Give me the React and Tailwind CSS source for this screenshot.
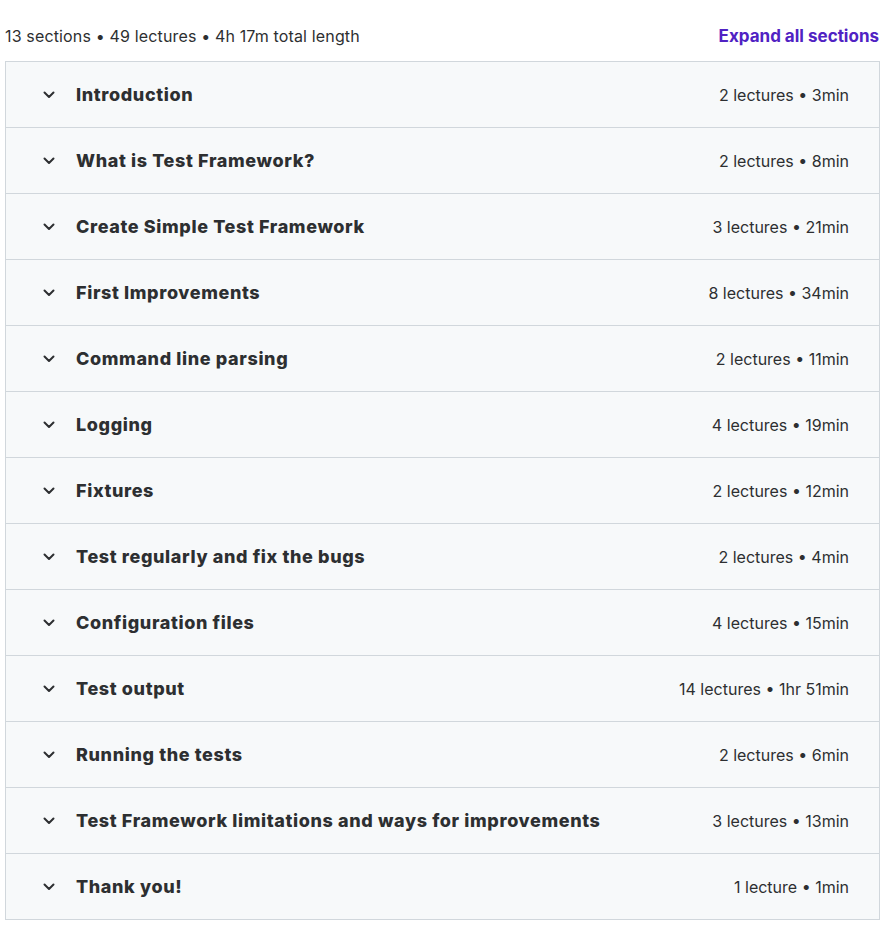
import React from 'react';

const sections = [
  { title: 'Introduction', meta: '2 lectures • 3min' },
  { title: 'What is Test Framework?', meta: '2 lectures • 8min' },
  { title: 'Create Simple Test Framework', meta: '3 lectures • 21min' },
  { title: 'First Improvements', meta: '8 lectures • 34min' },
  { title: 'Command line parsing', meta: '2 lectures • 11min' },
  { title: 'Logging', meta: '4 lectures • 19min' },
  { title: 'Fixtures', meta: '2 lectures • 12min' },
  { title: 'Test regularly and fix the bugs', meta: '2 lectures • 4min' },
  { title: 'Configuration files', meta: '4 lectures • 15min' },
  { title: 'Test output', meta: '14 lectures • 1hr 51min' },
  { title: 'Running the tests', meta: '2 lectures • 6min' },
  { title: 'Test Framework limitations and ways for improvements', meta: '3 lectures • 13min' },
  { title: 'Thank you!', meta: '1 lecture • 1min' },
];

const Chevron = () => (
  <svg width="12" height="8" viewBox="0 0 12 8" fill="none" stroke="#2d2f31" strokeWidth="2" strokeLinecap="round" strokeLinejoin="round">
    <path d="M1.5 1.5L6 6l4.5-4.5" />
  </svg>
);

const App = () => {
  return (
    <div className="w-[883px] min-h-[925px] bg-white font-['Inter',sans-serif] text-[#2d2f31]">
      {/* Summary bar */}
      <div className="flex justify-between items-center h-[61px] pt-[11px] pl-[5px] pr-[4px]">
        <span className="text-[16px] tracking-[0.15px]">13 sections • 49 lectures • 4h 17m total length</span>
        <button className="text-[17px] font-bold text-[#5022c3] pt-[2px]">Expand all sections</button>
      </div>

      {/* Curriculum sections */}
      <div className="ml-[5px] w-[875px] border border-[#d1d7dc] border-t-0">
        {sections.map((s, i) => (
          <div
            key={i}
            className="flex items-center justify-between h-[66px] bg-[#f7f9fa] border-t border-[#d1d7dc] pl-[37px] pr-[30px]"
          >
            <div className="flex items-center">
              <Chevron />
              <span className="ml-[21px] text-[18px] font-extrabold tracking-[0.62px] leading-[24px]">{s.title}</span>
            </div>
            <span className="text-[16px]">{s.meta}</span>
          </div>
        ))}
      </div>
    </div>
  );
};

export default App;
